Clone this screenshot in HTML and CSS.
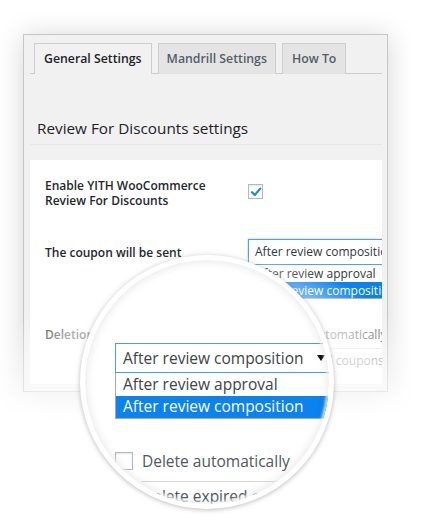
FILE: index.html
```html
<!DOCTYPE html>
<html>
<head>
<meta charset="utf-8">
<link rel="stylesheet" href="styles.css">
</head>
<body>
<div class="page">
  <div class="panel">
    <div class="tabs">
      <div class="tab active">General Settings</div>
      <div class="tab">Mandrill Settings</div>
      <div class="tab">How To</div>
    </div>
    <div class="heading">Review For Discounts settings</div>
    <div class="sheet">
      <div class="row row1">
        <div class="lbl">Enable YITH WooCommerce<br>Review For Discounts</div>
        <div class="field">
          <span class="cb checked"><svg width="12" height="12" viewBox="0 0 12 12"><path d="M2 6.2 L4.8 9 L10.2 2.6" fill="none" stroke="#1e8cbe" stroke-width="2.2" stroke-linecap="round" stroke-linejoin="round"/></svg></span>
        </div>
      </div>
      <div class="row row2">
        <div class="lbl lbl2">The coupon will be sent</div>
        <div class="field">
          <div class="sel">
            <span class="sel-text">After review composition</span>
            <div class="list">
              <div class="opt">After review approval</div>
              <div class="opt hl">After review composition</div>
            </div>
          </div>
        </div>
      </div>
      <div class="row row3">
        <div class="lbl">Deletion</div>
        <div class="field">
          <div class="cbline"><span class="cb"></span><span>Delete automatically</span></div>
          <div class="sep"></div>
          <div class="desc">Delete expired coupons</div>
        </div>
      </div>
    </div>
  </div>

  <div class="lens-wrap">
    <div class="magnifier">
      <div class="mag-content">
        <div class="mag-select">
          <span>After review composition</span>
          <svg class="arrow" width="8" height="6" viewBox="0 0 8 6"><polygon points="0,0 8,0 4,6" fill="#111"/></svg>
        </div>
        <div class="mag-list">
          <div class="mag-opt">After review approval</div>
          <div class="mag-opt hl">After review composition</div>
        </div>
        <div class="mag-cbline"><span class="mag-cb"></span><span>Delete automatically</span></div>
        <div class="mag-sep"></div>
        <div class="mag-desc">Delete expired coupons</div>
      </div>
    </div>
  </div>
</div>
</body>
</html>
```

FILE: styles.css
```css
html, body {
  margin: 0;
  padding: 0;
  background: #fff;
}
body {
  font-family: "Open Sans", "Noto Sans", sans-serif;
  color: #23282d;
  overflow: hidden;
  height: 530px;
}
.page {
  position: relative;
  height: 530px;
  box-sizing: border-box;
  overflow: hidden;
  padding: 34px 0 0 23px;
}
.panel {
  box-sizing: border-box;
  width: 365px;
  height: 358px;
  border: 1px solid #c6c6c6;
  background: #f1f1f1;
  box-shadow: 0 2px 26px rgba(0, 0, 0, 0.17);
  padding: 8px 5px 0 6px;
}
.tabs {
  display: flex;
  gap: 6px;
  padding-left: 4px;
  height: 30px;
  border-bottom: 1px solid #cdcdcd;
}
.tab {
  box-sizing: border-box;
  height: 31px;
  border: 1px solid #cdcdcd;
  border-bottom: none;
  background: #e4e4e4;
  padding: 0 9px;
  font-size: 12.3px;
  font-weight: 600;
  line-height: 30px;
  color: #555d66;
}
.tab.active {
  background: #f1f1f1;
  color: #1d2327;
}
.tab:nth-child(2) { padding: 0 8px; }
.heading {
  margin-top: 44px;
  padding: 0 7px 6px;
  font-size: 15.3px;
  line-height: 20px;
  color: #1d2327;
  border-bottom: 1px solid #e6e6e6;
}
.sheet {
  margin-top: 15px;
  background: #fff;
  height: 224px;
  overflow: hidden;
  padding: 0 15px;
  font-size: 12px;
}
.row {
  display: flex;
}
.lbl {
  width: 203px;
  flex: none;
  font-weight: 600;
  line-height: 15px;
  color: #23282d;
}
.field {
  flex: 1;
  min-width: 0;
  white-space: nowrap;
}
.row1 {
  padding-top: 17.5px;
}
.row1 .field {
  padding-top: 4.5px;
}
.cb {
  box-sizing: border-box;
  display: inline-flex;
  align-items: center;
  justify-content: center;
  flex: none;
  width: 15px;
  height: 15px;
  border: 1px solid #b4b9be;
  background: #fff;
  box-shadow: inset 0 1px 2px rgba(0, 0, 0, 0.1);
  vertical-align: middle;
}
.row2 {
  margin-top: 31.5px;
}
.lbl2 {
  margin-top: 5.5px;
}
.sel {
  position: relative;
  box-sizing: border-box;
  width: 170px;
  height: 26px;
  border: 1px solid #5b9dd9;
  box-shadow: 0 0 2px rgba(30, 140, 190, 0.5);
  padding-left: 6px;
  line-height: 24px;
  color: #32373c;
  white-space: nowrap;
}
.list {
  position: absolute;
  left: -1px;
  top: 25px;
  width: 170px;
  border: 1px solid #a8a8a8;
  border-top: none;
  background: #fff;
}
.opt {
  height: 16.5px;
  line-height: 17px;
  padding-left: 7px;
  color: #32373c;
}
.opt.hl {
  background: #0b82ee;
  color: #fff;
}
.row3 {
  margin-top: 62px;
}
.cbline {
  display: flex;
  align-items: center;
  gap: 6px;
  padding-left: 3px;
  line-height: 15px;
  color: #50575e;
}
.sep {
  margin-top: 6px;
  width: 200px;
  border-top: 1px solid #e2e2e2;
}
.desc {
  margin-top: 4px;
  color: #888;
  line-height: 15px;
  padding-left: 3px;
}

/* magnifier */
.lens-wrap {
  position: absolute;
  left: 80px;
  top: 255px;
  width: 254px;
  height: 254px;
}
.lens-wrap::before {
  content: "";
  position: absolute;
  left: -80px;
  top: -5px;
  width: 426px;
  height: 275px;
  background: radial-gradient(ellipse 230px 170px at 207px 170px, rgba(255, 255, 255, 0.68) 0%, rgba(255, 255, 255, 0.62) 78%, rgba(255, 255, 255, 0) 100%);
}
.magnifier {
  position: relative;
  box-sizing: border-box;
  width: 254px;
  height: 254px;
  border: 5px solid #fff;
  border-radius: 50%;
  overflow: hidden;
  background: #fff;
  box-shadow: 0 1px 4px rgba(0, 0, 0, 0.22), 0 0 10px rgba(0, 0, 0, 0.06);
}
.magnifier::after {
  content: "";
  position: absolute;
  inset: 0;
  border-radius: 50%;
  box-shadow: inset 0 0 10px 1px rgba(0, 0, 0, 0.1), inset 0 0 3px 2px rgba(255, 255, 255, 0.9);
  pointer-events: none;
}
.mag-content {
  padding: 83px 0 0 30px;
  font-size: 15.5px;
  color: #3c434a;
  white-space: nowrap;
}
.mag-select {
  box-sizing: border-box;
  display: flex;
  align-items: center;
  justify-content: space-between;
  width: 216px;
  height: 30px;
  border: 1.5px solid #4a9fe0;
  padding: 0 5px 0 7px;
  line-height: 28px;
}
.arrow {
  flex: none;
}
.mag-list {
  box-sizing: border-box;
  width: 216px;
  border: 1px solid #a8a8a8;
  border-top: none;
}
.mag-opt {
  height: 23px;
  line-height: 23px;
  padding-left: 7px;
}
.mag-opt.hl {
  height: 22px;
  line-height: 21px;
  background: #0b82ee;
  color: #fff;
}
.mag-cbline {
  display: flex;
  align-items: center;
  gap: 9px;
  margin-top: 33px;
  line-height: 18px;
  color: #50575e;
}
.mag-cb {
  box-sizing: border-box;
  flex: none;
  width: 18px;
  height: 18px;
  border: 1px solid #b4b9be;
  background: #fff;
  box-shadow: inset 0 1px 2px rgba(0, 0, 0, 0.1);
}
.mag-sep {
  margin: 11px 0 0 26px;
  width: 190px;
  border-top: 1px solid #d6d6d6;
}
.mag-desc {
  margin-top: 5px;
  padding-left: 27px;
  line-height: 18px;
  color: #50575e;
}
```
